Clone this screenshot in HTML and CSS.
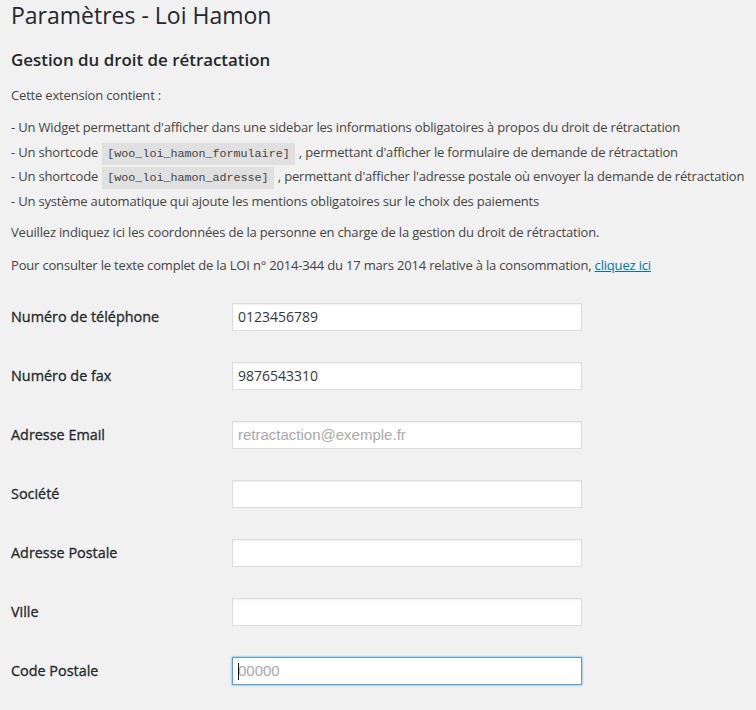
FILE: index.html
```html
<!DOCTYPE html>
<html lang="fr">
<head>
<meta charset="utf-8">
<title>Paramètres - Loi Hamon</title>
<link rel="stylesheet" href="styles.css">
</head>
<body>
<div class="wrap">
  <h1 class="page-title">Paramètres - Loi Hamon</h1>
  <h3 class="section-title">Gestion du droit de rétractation</h3>
  <p class="intro">Cette extension contient :</p>
  <div class="features">
    <div class="feature">- Un Widget permettant d'afficher dans une sidebar les informations obligatoires à propos du droit de rétractation</div>
    <div class="feature">- Un shortcode <code>[woo_loi_hamon_formulaire]</code> , permettant d'afficher le formulaire de demande de rétractation</div>
    <div class="feature">- Un shortcode <code>[woo_loi_hamon_adresse]</code> , permettant d'afficher l'adresse postale où envoyer la demande de rétractation</div>
    <div class="feature">- Un système automatique qui ajoute les mentions obligatoires sur le choix des paiements</div>
  </div>
  <p class="text">Veuillez indiquez ici les coordonnées de la personne en charge de la gestion du droit de rétractation.</p>
  <p class="text">Pour consulter le texte complet de la LOI n° 2014-344 du 17 mars 2014 relative à la consommation, <a href="#" class="link">cliquez ici</a></p>

  <form class="form-table">
    <div class="row">
      <label class="label" for="tel">Numéro de téléphone</label>
      <input class="field" id="tel" type="text" value="0123456789">
    </div>
    <div class="row">
      <label class="label" for="fax">Numéro de fax</label>
      <input class="field" id="fax" type="text" value="9876543310">
    </div>
    <div class="row">
      <label class="label" for="email">Adresse Email</label>
      <input class="field" id="email" type="text" placeholder="retractaction@exemple.fr">
    </div>
    <div class="row">
      <label class="label" for="soc">Société</label>
      <input class="field" id="soc" type="text">
    </div>
    <div class="row">
      <label class="label" for="adr">Adresse Postale</label>
      <input class="field" id="adr" type="text">
    </div>
    <div class="row">
      <label class="label" for="ville">Ville</label>
      <input class="field" id="ville" type="text">
    </div>
    <div class="row">
      <label class="label" for="cp">Code Postale</label>
      <span class="field-wrap">
        <input class="field is-focused" id="cp" type="text" placeholder="00000">
        <span class="caret"></span>
      </span>
    </div>
  </form>
</div>
</body>
</html>
```
FILE: styles.css
```css
html, body {
  margin: 0;
  padding: 0;
  background: #f1f1f1;
}
body {
  font-family: "Open Sans", "Liberation Sans", sans-serif;
  font-size: 13px;
  color: #444;
}
.wrap {
  padding: 1px 0 0 11px;
}
.page-title {
  margin: 0;
  font-size: 23px;
  font-weight: 400;
  line-height: 29px;
  color: #23282d;
}
.section-title {
  margin: 19px 0 0;
  font-size: 16.9px;
  font-weight: 600;
  line-height: 22px;
  color: #23282d;
}
.intro {
  margin: 15px 0 0;
  line-height: 19.5px;
  letter-spacing: -0.18px;
}
.features {
  margin-top: 9.7px;
  line-height: 24.5px;
  letter-spacing: -0.18px;
}
.feature {
  white-space: nowrap;
}
code {
  font-family: "Liberation Mono", "DejaVu Sans Mono", monospace;
  font-size: 11.7px;
  line-height: 1;
  letter-spacing: 0;
  background: rgba(0,0,0,0.07);
  padding: 4px 5px 4px;
  margin: 0 1px;
  color: #444;
}
.text {
  margin: 9.5px 0 0;
  line-height: 19.5px;
  letter-spacing: -0.18px;
}
.text + .text {
  margin-top: 13.5px;
}
.link {
  color: #0073aa;
  text-decoration: underline;
}
.form-table {
  margin-top: 12px;
  display: flex;
  flex-direction: column;
}
.row {
  height: 59px;
  display: flex;
  align-items: center;
}
.label {
  width: 221px;
  flex: none;
  font-size: 14.4px;
  font-weight: 400;
  -webkit-text-stroke: 0.3px #23282d;
  color: #23282d;
}
.field-wrap {
  position: relative;
  display: inline-flex;
}
.field {
  box-sizing: border-box;
  width: 350px;
  height: 28px;
  margin: 0;
  padding: 3px 5px;
  border: 1px solid #ddd;
  background: #fff;
  box-shadow: inset 0 1px 2px rgba(0,0,0,0.07);
  font-family: "Open Sans", "Liberation Sans", sans-serif;
  font-size: 14px;
  color: #32373c;
  outline: none;
}
.field::placeholder {
  font-family: "Liberation Sans", Arial, sans-serif;
  font-size: 15px;
  color: #a9a9a9;
  opacity: 1;
}
.field.is-focused {
  border-color: #5b9dd9;
  box-shadow: 0 0 2px rgba(30,140,190,0.8);
}
.caret {
  position: absolute;
  left: 6px;
  top: 6px;
  width: 1px;
  height: 17px;
  background: #111;
}
```
